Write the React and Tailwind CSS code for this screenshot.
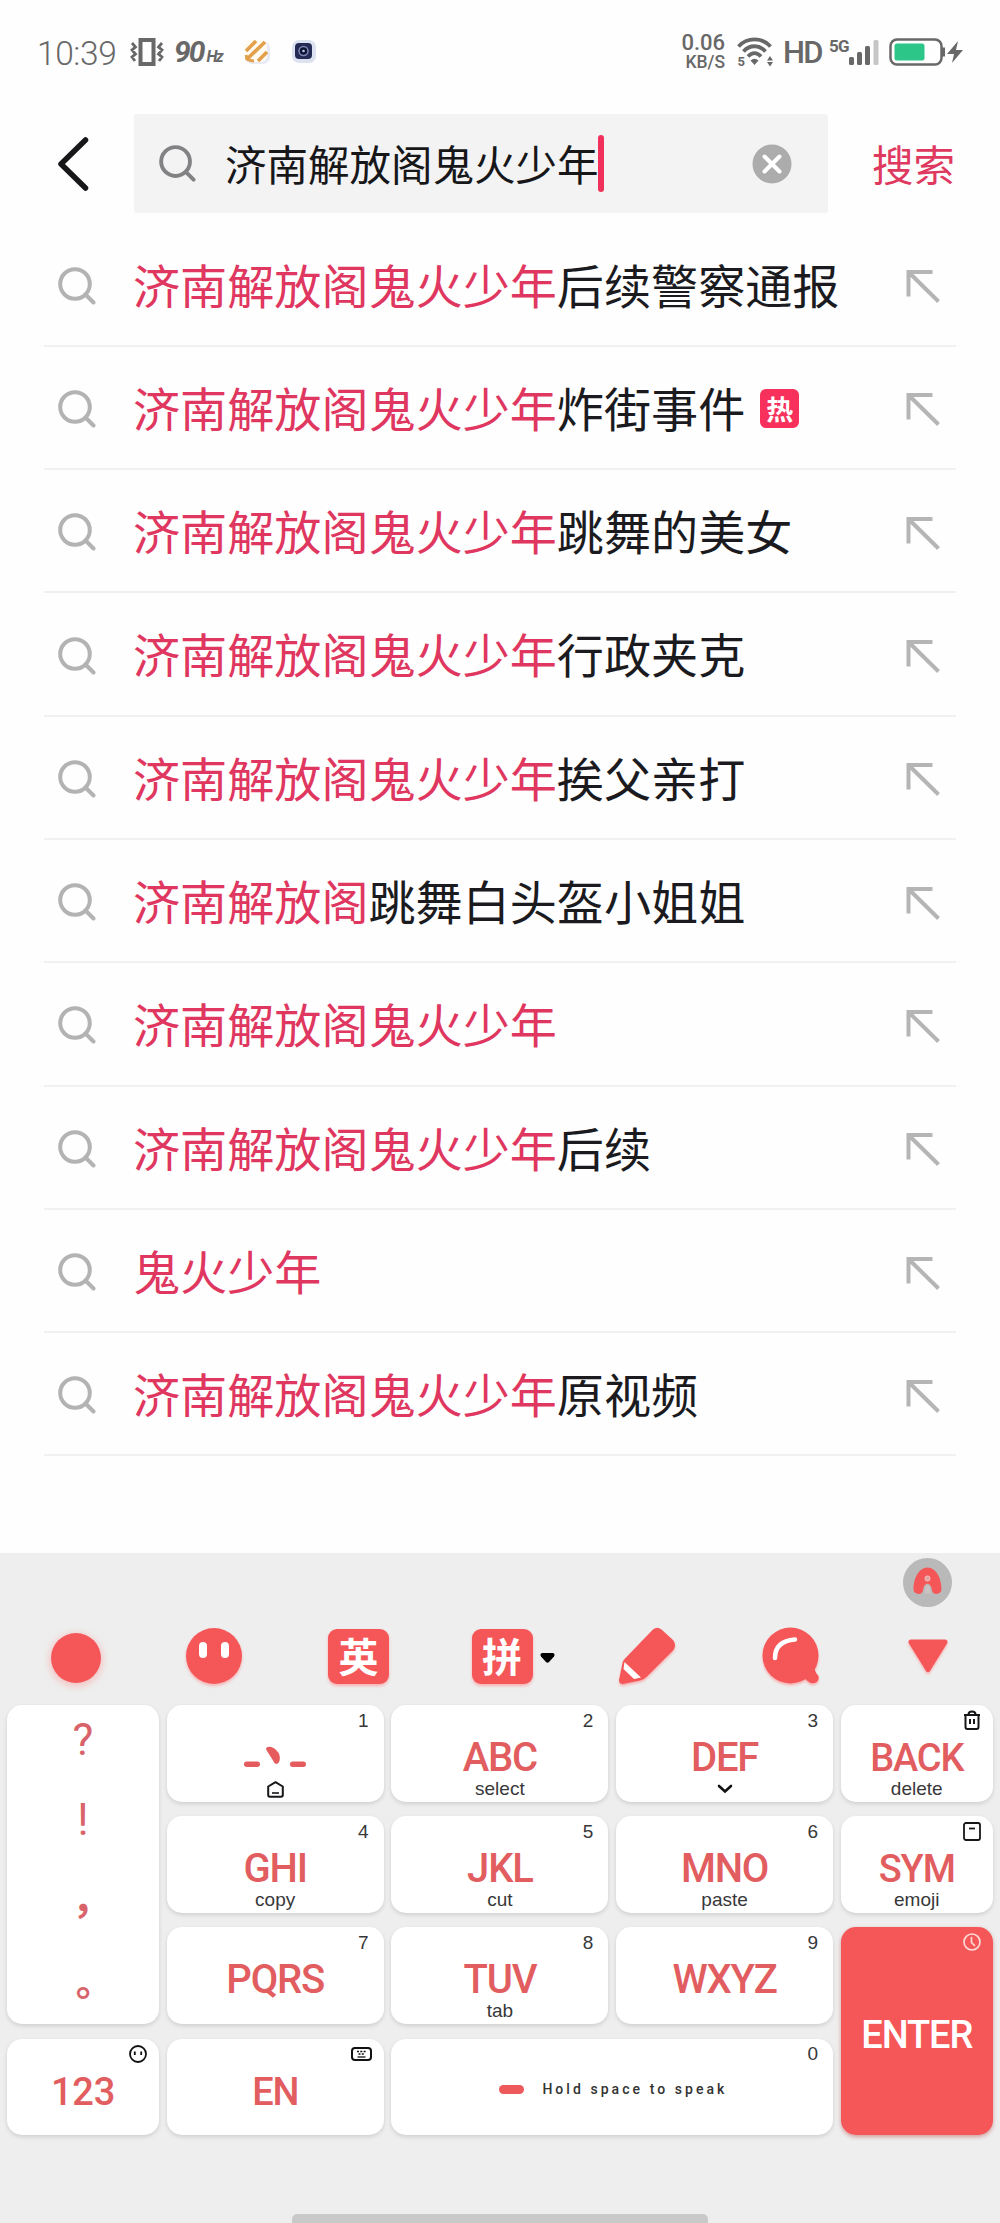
const SUGGESTIONS = [
  { match: "济南解放阁鬼火少年", rest: "后续警察通报" },
  { match: "济南解放阁鬼火少年", rest: "炸街事件", hot: true },
  { match: "济南解放阁鬼火少年", rest: "跳舞的美女" },
  { match: "济南解放阁鬼火少年", rest: "行政夹克" },
  { match: "济南解放阁鬼火少年", rest: "挨父亲打" },
  { match: "济南解放阁", rest: "跳舞白头盔小姐姐" },
  { match: "济南解放阁鬼火少年", rest: "" },
  { match: "济南解放阁鬼火少年", rest: "后续" },
  { match: "鬼火少年", rest: "" },
  { match: "济南解放阁鬼火少年", rest: "原视频" },
];

function StatusBar() {
  return (
    <header className="h-[104px] flex items-start justify-between pl-[37px] pr-[36px] text-[#686868] font-['Roboto',sans-serif]">
      <div className="flex items-center h-[104px]">
        <span className="text-[33.5px] font-light leading-none w-[93px] tracking-[-0.4px] mt-[3px]">10:39</span>
        <svg width="34" height="28" viewBox="0 0 34 28" fill="none" stroke="currentColor" className="shrink-0">
          <rect x="10.5" y="2" width="13" height="24" strokeWidth="4" />
          <path d="M2 5l3.500 4L2 12l3.500 4L2 19l3 4M32 5l-3.500 4 3.500 3-3.500 4 3.500 3-3 4" strokeWidth="2.800" />
        </svg>
        <span className="ml-[10px] flex items-baseline italic font-bold leading-none w-[70px]">
          <span className="text-[30px] tracking-[-2px]">90</span>
          <span className="text-[16px] tracking-[-1.5px] ml-[3px]">Hz</span>
        </span>
        <svg width="28" height="26" viewBox="0 0 28 26" className="shrink-0">
          <rect x="1" y="2" width="25" height="23" rx="7" fill="#e9ebf7" />
          <rect x="1" y="1" width="22" height="22" rx="6" fill="#fffaf2" />
          <path d="M2 12L12 2M2 21L21 3M14 22l9-9" stroke="#e2a04a" strokeWidth="3.600" />
          <path d="M2 16q1 6 8 6" stroke="#e2a04a" strokeWidth="3" fill="none" />
        </svg>
        <svg width="26" height="26" viewBox="0 0 26 26" className="shrink-0 ml-[20px]">
          <rect x="0" y="1" width="24" height="23" rx="7" fill="#dde2f1" />
          <rect x="3" y="4" width="17" height="16" rx="4" fill="#232b55" />
          <circle cx="11.500" cy="12" r="4.500" fill="#0e1433" stroke="#7f88b5" strokeWidth="1.500" />
          <circle cx="11.500" cy="12" r="1.300" fill="#b9c2e8" />
        </svg>
      </div>

      <div className="flex items-center h-[104px]">
        <div className="flex flex-col items-end font-medium w-[46px]">
          <span className="text-[22px] leading-[22px]">0.06</span>
          <span className="text-[17.5px] leading-[17.5px]">KB/S</span>
        </div>
        <svg width="38" height="30" viewBox="0 0 38 30" fill="none" stroke="currentColor" className="ml-[11px] shrink-0 overflow-visible">
          <path d="M2.500 9.500C11 0 26 0 34.500 9.500" strokeWidth="3.800" />
          <path d="M7.500 14.500c6-7 16-7 22 0" strokeWidth="3.800" />
          <path d="M12 19.500c4-4.500 9-4.500 13 0" strokeWidth="3.600" />
          <path d="M18.500 28l-4-4.500q4-3.500 8 0z" fill="currentColor" stroke="none" />
          <path d="M31 23.500l3-4.500 3 4.500zM31 25l3 4.500 3-4.500z" fill="currentColor" stroke="none" />
          <text x="1.500" y="28.500" fontSize="13" fontWeight="700" fill="currentColor" stroke="none">5</text>
        </svg>
        <span className="ml-[9px] w-[46px] text-[31px] font-medium leading-none tracking-[-1.800px]">HD</span>
        <div className="flex items-end h-[26px]">
          <span className="text-[17px] font-bold leading-[14px] tracking-[-0.800px] self-start w-[20px]">5G</span>
          <svg width="30" height="26" viewBox="0 0 30 26" fill="currentColor">
            <rect x="0" y="18" width="5" height="8" rx="1.500" />
            <rect x="8" y="13" width="5" height="13" rx="1.500" />
            <rect x="16" y="7" width="5" height="19" rx="1.500" />
            <rect x="24.500" y="1" width="5" height="25" rx="1.500" fill="#c6c6c6" />
          </svg>
        </div>
        <svg width="75" height="28" viewBox="0 0 75 28" className="ml-[10px] shrink-0">
          <rect x="1.500" y="1.500" width="51" height="25" rx="6.500" fill="none" stroke="currentColor" strokeWidth="2.500" />
          <rect x="5.500" y="5.500" width="30" height="17" rx="2.500" fill="#2cc688" />
          <rect x="53" y="9.500" width="3" height="9" fill="currentColor" />
          <path d="M69 3L58 16h7l-2 9 11-13h-7z" fill="currentColor" />
        </svg>
      </div>
    </header>
  );
}

function SearchIcon({ className }) {
  return (
    <svg width="38" height="38" viewBox="0 0 38 38" fill="none" stroke="currentColor" strokeWidth="4" strokeLinecap="round" className={className}>
      <circle cx="17" cy="17" r="14.800" />
      <path d="M27.500 27.500L35.500 35.500" />
    </svg>
  );
}

function SearchHeader() {
  return (
    <div className="flex items-center h-[119.5px]">
      <svg width="32" height="54" viewBox="0 0 32 54" fill="none" stroke="#17171a" strokeWidth="5.500" strokeLinecap="round" strokeLinejoin="round" className="ml-[57px] shrink-0">
        <path d="M28.500 3L4 27l24.500 24" />
      </svg>
      <div className="ml-[45px] w-[694px] h-[99px] bg-[#f3f3f4] rounded-[3px] flex items-center shrink-0">
        <SearchIcon className="ml-[25px] w-[37px] h-[37px] text-[#828284]" />
        <span className="ml-[29px] text-[41.5px] leading-none text-[#17171a] whitespace-nowrap">济南解放阁鬼火少年</span>
        <span className="w-[6px] h-[57px] rounded-full bg-[#f0315b] -ml-px" />
        <svg width="40" height="40" viewBox="0 0 40 40" className="ml-auto mr-[36px]">
          <circle cx="20" cy="20" r="19.500" fill="#acacac" />
          <path d="M12.500 12.500l15 15M27.500 12.500l-15 15" stroke="#fff" strokeWidth="4" strokeLinecap="round" />
        </svg>
      </div>
      <span className="ml-[44px] text-[41.5px] leading-none text-[#df3960]">搜索</span>
    </div>
  );
}

function SuggestionRow({ item }) {
  return (
    <li className="h-[123.3px] flex items-center border-b-2 border-[#f1f1f1] pl-[14px] pr-[16px]">
      <SearchIcon className="text-[#b3b3b4] shrink-0 mt-[3px]" />
      <p className="ml-[37px] -mt-[2px] text-[47.1px] leading-none text-[#1b1b1f] whitespace-nowrap">
        <span className="text-[#df375f]">{item.match}</span>
        {item.rest}
      </p>
      {item.hot && (
        <span className="ml-[15px] mt-[3px] size-[39px] rounded-[6px] bg-[#f7315c] text-white text-[27px] leading-none font-bold flex items-center justify-center">
          热
        </span>
      )}
      <svg width="34" height="34" viewBox="0 0 34 34" fill="none" stroke="#b5b5b6" strokeWidth="4" className="ml-auto shrink-0 mt-[4px]">
        <path d="M26.500 3H2.500v24.500M2.500 3l30 29.500" />
      </svg>
    </li>
  );
}

/* Corner glyphs of the function keys */

function TrashIcon() {
  return (
    <svg width="18" height="20" viewBox="0 0 18 20" fill="none" stroke="#17171a" strokeWidth="2">
      <path d="M1 5h16M2.500 5v12q0 2 2 2h9q2 0 2-2V5M5.500 4.500q0-3 3.500-3t3.500 3M7 9v5M11 9v5" />
    </svg>
  );
}

function BoxIcon() {
  return (
    <svg width="18" height="19" viewBox="0 0 18 19" fill="none" stroke="#17171a" strokeWidth="1.800">
      <rect x="1" y="1" width="16" height="17" rx="2" />
      <path d="M6 6.500h6" />
    </svg>
  );
}

function ClockIcon() {
  return (
    <svg width="18" height="18" viewBox="0 0 18 18" fill="none" stroke="#ffd9d5" strokeWidth="1.700" strokeLinecap="round">
      <circle cx="9" cy="9" r="8" />
      <path d="M8.500 4.500v5l3 3" />
    </svg>
  );
}

function FaceIcon() {
  return (
    <svg width="18" height="18" viewBox="0 0 18 18" fill="none" stroke="#111" strokeWidth="1.800">
      <circle cx="9" cy="9" r="8" />
      <path d="M5.800 6.500v3.500M12.200 6.500v3.500" />
    </svg>
  );
}

function KeyboardIcon() {
  return (
    <svg width="21" height="14" viewBox="0 0 21 14" fill="none" stroke="#111" strokeWidth="2">
      <rect x="1" y="1" width="19" height="12" rx="3" />
      <path d="M6 4.500h9M7.500 7h6" strokeWidth="1.300" strokeDasharray="2 1.300" />
      <path d="M6.500 10h8" strokeWidth="1.300" />
    </svg>
  );
}

function HomeIcon() {
  return (
    <svg width="17" height="17" viewBox="0 0 17 17" fill="none" stroke="#17171a" strokeWidth="2" strokeLinejoin="round">
      <path d="M1.200 5.500L8.500 1.200l7.300 4.300v8.500q0 1.800-1.800 1.800H3q-1.800 0-1.800-1.800z" />
      <path d="M5 12h7" strokeWidth="1.600" />
    </svg>
  );
}

function ChevronIcon() {
  return (
    <svg width="16" height="10" viewBox="0 0 16 10" fill="none" stroke="#111" strokeWidth="2.600" strokeLinecap="round">
      <path d="M2 2l6 5.500L14 2" />
    </svg>
  );
}

function StrokesIcon() {
  return (
    <svg width="62" height="40" viewBox="0 0 62 40" fill="#e65c5e">
      <rect x="0" y="23.500" width="16" height="5.500" rx="2.700" />
      <rect x="46" y="23.500" width="16" height="5.500" rx="2.700" />
      <path d="M23.500 9q5-1 9 3.500 4.500 4 3 10.500-1.500 4.500-5 2-3-5-7.500-12-2-3 .5-4z" />
    </svg>
  );
}

const KEYS = [
  { label: <StrokesIcon />, corner: "1", sub: <HomeIcon />, place: "col-start-2 row-start-1" },
  { label: "ABC", corner: "2", sub: "select", place: "col-start-3 row-start-1" },
  { label: "DEF", corner: "3", sub: <ChevronIcon />, place: "col-start-4 row-start-1" },
  { label: "BACK", corner: <TrashIcon />, sub: "delete", place: "col-start-5 row-start-1", side: true },
  { label: "GHI", corner: "4", sub: "copy", place: "col-start-2 row-start-2" },
  { label: "JKL", corner: "5", sub: "cut", place: "col-start-3 row-start-2" },
  { label: "MNO", corner: "6", sub: "paste", place: "col-start-4 row-start-2" },
  { label: "SYM", corner: <BoxIcon />, sub: "emoji", place: "col-start-5 row-start-2", side: true },
  { label: "PQRS", corner: "7", place: "col-start-2 row-start-3" },
  { label: "TUV", corner: "8", sub: "tab", place: "col-start-3 row-start-3" },
  { label: "WXYZ", corner: "9", place: "col-start-4 row-start-3" },
  { label: "123", corner: <FaceIcon />, place: "col-start-1 row-start-4", side: true, wide: true },
  { label: "EN", corner: <KeyboardIcon />, place: "col-start-2 row-start-4", side: true },
];

function Corner({ side, children }) {
  return (
    <span className={`absolute top-[5px] h-[20px] flex items-center text-[19px] leading-none text-[#38383a] font-['Liberation_Sans',sans-serif] ${side ? "right-[12px]" : "right-[15px]"}`}>
      {children}
    </span>
  );
}

function Key({ item }) {
  return (
    <button className={`relative rounded-[15px] bg-white shadow-[0_2px_4px_rgba(0,0,0,0.13)] flex flex-col items-center pt-[33px] ${item.place}`}>
      <Corner side={item.side}>{item.corner}</Corner>
      <span className={`h-[40px] leading-[40px] font-medium text-[#e25d60] font-['Roboto',sans-serif] ${item.side ? "text-[38px]" : "text-[40px]"} ${item.wide ? "tracking-[-0.2px]" : "tracking-[-1.2px]"}`}>
        {item.label}
      </span>
      {item.sub && (
        <span className="mt-px h-[20px] flex items-center text-[19px] leading-[20px] text-[#38383a] font-['Liberation_Sans',sans-serif]">
          {item.sub}
        </span>
      )}
    </button>
  );
}

function Toolbar() {
  return (
    <div className="flex items-center h-[98px] text-[#f55759]">
      <div className="w-[142px] pl-[51px] pt-[4px]">
        <div className="size-[50px] rounded-full bg-[#f55759] shadow-[0_2px_6px_2px_rgba(255,150,150,0.45)]" />
      </div>
      <div className="w-[144.3px] flex justify-center">
        <div className="size-[56px] rounded-full bg-[#f55759] shadow-[0_2px_3px_rgba(255,120,120,0.5)] flex justify-center gap-[14px] pt-[14px]">
          <span className="w-[8px] h-[16px] rounded-full bg-white" />
          <span className="w-[8px] h-[16px] rounded-full bg-white" />
        </div>
      </div>
      <div className="w-[144.3px] flex justify-center">
        <div className="w-[61px] h-[55px] rounded-[9px] bg-[#f55759] shadow-[0_2px_3px_rgba(255,120,120,0.5)] text-white text-[40px] leading-none font-bold flex items-center justify-center pb-[3px]">英</div>
      </div>
      <div className="w-[144.3px] flex items-center pl-[41px]">
        <div className="w-[61px] h-[55px] rounded-[9px] bg-[#f55759] shadow-[0_2px_3px_rgba(255,120,120,0.5)] text-white text-[40px] leading-none font-bold flex items-center justify-center pb-[3px]">拼</div>
        <svg width="15" height="10" viewBox="0 0 15 10" className="ml-[7px] mt-[4px]">
          <path d="M2 0h11q2.500 1 1 3.500L9 9q-1.500 1.500-3 0L1 3.500Q-.5 1 2 0z" fill="#000" />
        </svg>
      </div>
      <div className="w-[144.3px] flex justify-center">
        <svg width="60" height="60" viewBox="0 0 60 60" fill="currentColor" className="drop-shadow-[0_2px_1px_rgba(255,120,120,0.5)]">
          <path d="M36 3.500q4-3.500 8.500 0L56 14q4 4.500 0.500 10L30 50.500q-3 3-7 4L6 58q-4 0-4-4l3.500-17q0.500-2.500 2.500-4.500z" />
          <path d="M7.500 36L24 51.500l-7 1.500L6.500 43z" fill="#fff" />
        </svg>
      </div>
      <div className="w-[144.3px] flex justify-center">
        <svg width="58" height="58" viewBox="0 0 58 58" className="drop-shadow-[0_2px_1px_rgba(255,120,120,0.5)]">
          <circle cx="28.500" cy="28.500" r="28" fill="currentColor" />
          <path d="M44 42h8.500q1 4 4 7 1 6-4 7-5 1-9-4z" fill="currentColor" />
          <path d="M13 31q0-17 20-18.500" stroke="#fff" strokeWidth="4.500" strokeLinecap="round" fill="none" />
        </svg>
      </div>
      <div className="flex-1 flex justify-center pr-[8px]">
        <svg width="42" height="34" viewBox="0 0 42 34" className="drop-shadow-[0_2px_1px_rgba(255,120,120,0.5)]">
          <path d="M4 3h34L21 30.500z" fill="currentColor" stroke="currentColor" strokeWidth="5" strokeLinejoin="round" />
        </svg>
      </div>
    </div>
  );
}

function Keyboard() {
  return (
    <section className="h-[670px] bg-[#eeeeee] flex flex-col overflow-hidden">
      <div className="h-[54px] flex justify-end pr-[48px] pt-[4.500px] shrink-0">
        <svg width="49" height="49" viewBox="0 0 49 49">
          <circle cx="24.500" cy="24.500" r="24.500" fill="#b9b9b9" />
          <path d="M10.500 31c0-10 5-21.500 14-21.500S38.500 21 38.500 31c0 6-9 6.500-9.500 1.500-1-9-8-9-9 0-.5 5-9.500 4.500-9.500-1.500z" fill="#f55759" />
          <circle cx="24.500" cy="20.500" r="2.200" fill="#d9a0a0" stroke="#f0b3b0" strokeWidth="1.500" />
          <path d="M22.500 27.500h4l1 8h-6z" fill="#c9c3c3" />
        </svg>
      </div>
      <Toolbar />

      <div className="grid grid-cols-[152px_217px_217px_217px_152px] grid-rows-[repeat(4,96.5px)] gap-x-[7.700px] gap-y-[14.700px] pl-[7px] shrink-0">
        <div className="col-start-1 row-start-1 row-span-3 rounded-[15px] bg-white shadow-[0_2px_4px_rgba(0,0,0,0.13)] flex flex-col items-center text-[#d9636a]">
          <span className="h-[75px] leading-[70px] text-[44px] font-['Roboto',sans-serif]">?</span>
          <span className="h-[80px] leading-[80px] text-[44px] font-['Roboto',sans-serif]">!</span>
          <span className="h-[86px] leading-[97px] text-[40px] font-bold font-['Noto_Sans_CJK_TC',sans-serif]">，</span>
          <span className="h-[78px] leading-[90px] text-[38px] font-bold font-['Noto_Sans_CJK_TC',sans-serif]">。</span>
        </div>

        {KEYS.map((item, i) => (
          <Key key={i} item={item} />
        ))}

        <button className="relative col-start-3 col-span-2 row-start-4 rounded-[15px] bg-white shadow-[0_2px_4px_rgba(0,0,0,0.13)] flex items-center pl-[108px] pt-[5px]">
          <Corner>0</Corner>
          <span className="w-[25px] h-[9px] rounded-full bg-[#ee5a5c]" />
          <span className="ml-[18px] text-[14px] leading-none font-medium tracking-[3.050px] whitespace-nowrap text-[#333] font-['Roboto',sans-serif]">
            Hold space to speak
          </span>
        </button>

        <button className="relative col-start-5 row-start-3 row-span-2 rounded-[15px] bg-[#f55759] shadow-[0_2px_4px_rgba(160,0,0,0.35)] flex items-center justify-center pt-[8px] text-[38px] leading-none font-medium tracking-[-1.1px] text-white font-['Roboto',sans-serif]">
          <Corner side>
            <ClockIcon />
          </Corner>
          ENTER
        </button>
      </div>

      <div className="mt-auto mx-auto w-[416px] h-[9px] rounded-t-[5px] bg-[#c9c9c9] shrink-0" />
    </section>
  );
}

export default function App() {
  return (
    <div className="w-[1000px] h-[2223px] bg-[#fefefe] flex flex-col overflow-hidden font-['Noto_Sans_CJK_SC',sans-serif]" lang="zh-CN">
      <StatusBar />
      <SearchHeader />
      <ul className="mx-[44px]">
        {SUGGESTIONS.map((item, i) => (
          <SuggestionRow key={i} item={item} />
        ))}
      </ul>
      <div className="flex-1" />
      <Keyboard />
    </div>
  );
}
